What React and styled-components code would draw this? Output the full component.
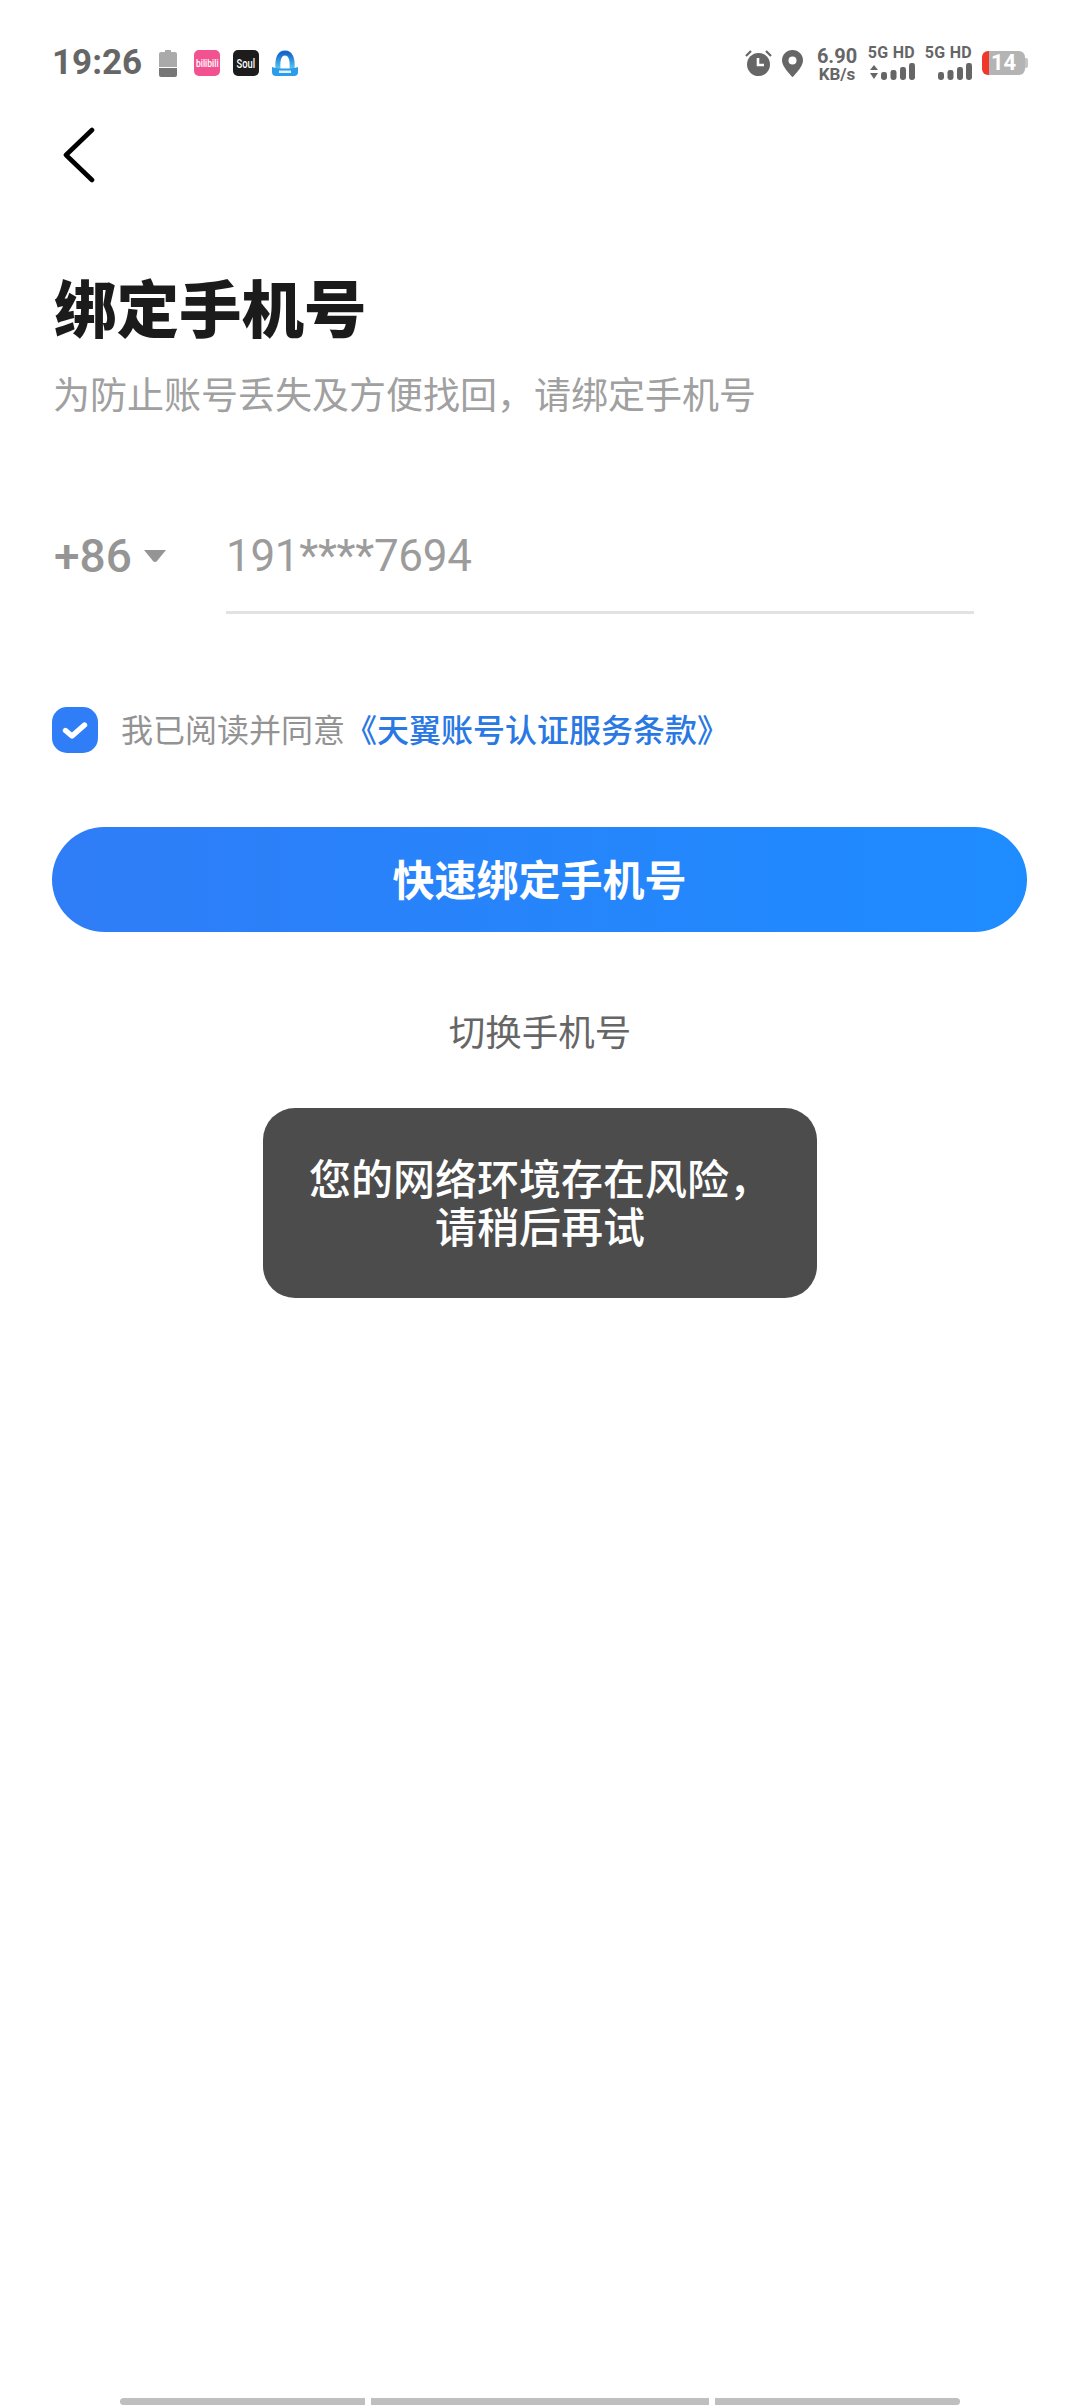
import React from 'react'
import styled, { createGlobalStyle } from 'styled-components'

const cjk = '"Noto Sans CJK SC", "Noto Sans", sans-serif'
const latin = 'Roboto, "Noto Sans CJK SC", sans-serif'

const GlobalStyle = createGlobalStyle`
    html, body {
        margin: 0;
        padding: 0;
        background: #fff;
    }
`

const Page = styled.div`
    position: relative;
    width: 1080px;
    height: 2408px;
    overflow: hidden;
    display: flex;
    flex-direction: column;
    background: #fff;
    font-family: ${cjk};
`

const StatusBar = styled.div`
    display: flex;
    align-items: center;
    justify-content: space-between;
    height: 34px;
    margin-top: 46px;
    padding: 0 52px;
`

const StatusGroup = styled.div`
    display: flex;
    align-items: center;
    gap: ${p => p.$gap}px;
`

const Time = styled.span`
    font-family: ${latin};
    font-size: 35px;
    font-weight: 700;
    line-height: 34px;
    color: #666;
    margin-right: 4px;
`

const ChargeIcon = styled.svg`
    display: block;
    margin-right: 4px;
`

const AppTile = styled.div`
    width: 26px;
    height: 26px;
    border-radius: 5px;
    background: ${p => p.$bg};
    color: #fff;
    display: flex;
    align-items: center;
    justify-content: center;
    font-family: ${latin};
    font-size: ${p => p.$size}px;
    font-weight: 500;
    overflow: hidden;
`

const TileText = styled.span`
    display: inline-block;
    transform: scaleX(${p => p.$squeeze});
`

const Speed = styled.div`
    display: flex;
    flex-direction: column;
    align-items: center;
    width: 42px;
    margin: 4px 0 0 3px;
    color: #666;
    font-family: ${latin};
    font-weight: 700;
`

const SpeedValue = styled.span`
    font-size: 20px;
    line-height: 18px;
    white-space: nowrap;
`

const SpeedUnit = styled.span`
    font-size: 17px;
    line-height: 18px;
    white-space: nowrap;
`

const Signal = styled.div`
    display: flex;
    flex-direction: column;
    align-items: flex-end;
    width: 47px;
    gap: 3px;
`

const SignalLabel = styled.span`
    font-family: ${latin};
    font-size: 16px;
    font-weight: 700;
    line-height: 14px;
    letter-spacing: 0.3px;
    white-space: nowrap;
    color: #666;
`

const BatteryBody = styled.div`
    position: relative;
    width: 43px;
    height: 24px;
    border-radius: 6px;
    background: linear-gradient(90deg, #f0372c 0 7px, #b4b4b4 7px);
    color: #fff;
    font-family: ${latin};
    font-size: 22px;
    font-weight: 700;
    line-height: 24px;
    text-align: center;
    margin-right: 3px;
    &::after {
        content: '';
        position: absolute;
        right: -3px;
        top: 7px;
        width: 3px;
        height: 10px;
        border-radius: 0 2px 2px 0;
        background: #c4c4c4;
    }
`

const BackButton = styled.div`
    width: 34px;
    height: 56px;
    margin: 47px 0 0 62px;
`

const Title = styled.h1`
    margin: 80px 0 0 54px;
    font-size: 62.5px;
    line-height: 86px;
    font-weight: 900;
    color: #1b1b1b;
`

const Subtitle = styled.p`
    margin: 18px 0 0 53px;
    font-size: 37px;
    line-height: 52px;
    color: #a0a0a0;
`

const PhoneRow = styled.div`
    display: flex;
    margin: 92px 0 0 54px;
    height: 137px;
`

const Country = styled.div`
    display: flex;
    align-items: center;
    gap: 11px;
    width: 172px;
    height: 90px;
    color: #959595;
    font-family: ${latin};
    font-size: 46px;
    font-weight: 500;
`

const PhoneField = styled.div`
    width: 748px;
    height: 100px;
    line-height: 90px;
    border-bottom: 3px solid #e2e2e2;
    color: #9c9c9c;
    font-family: ${latin};
    font-size: 44px;
    letter-spacing: -0.3px;
`

const AgreeRow = styled.div`
    display: flex;
    align-items: center;
    gap: 23px;
    margin: 59px 0 0 52px;
    height: 46px;
`

const Agree = styled.span`
    padding-bottom: 5px;
    font-size: 32px;
    line-height: 46px;
    color: #939393;
    white-space: nowrap;
`

const AgreeLink = styled.span`
    color: #2a78e4;
    font-weight: 500;
    font-size: 32px;
`

const PrimaryButton = styled.div`
    display: flex;
    align-items: center;
    justify-content: center;
    box-sizing: border-box;
    width: 975px;
    height: 105px;
    margin: 74px 0 0 52px;
    padding-bottom: 4px;
    border-radius: 53px;
    background: linear-gradient(90deg, #2f7df7, #1e8cff);
    color: #fff;
    font-size: 42px;
    font-weight: 700;
`

const SwitchLink = styled.div`
    margin-top: 73px;
    text-align: center;
    font-size: 36.5px;
    line-height: 52px;
    color: #666;
`

const Toast = styled.div`
    position: absolute;
    left: 263px;
    top: 1108px;
    width: 554px;
    height: 190px;
    box-sizing: border-box;
    padding-top: 45px;
    border-radius: 32px;
    background: #4c4c4c;
    color: #fff;
    text-align: center;
    font-size: 42px;
    line-height: 48px;
    font-weight: 500;
`

const HomeBar = styled.div`
    display: flex;
    gap: 6px;
    margin: auto 0 3px 120px;
`

const HomeSegment = styled.div`
    width: ${p => p.$width}px;
    height: 7px;
    background: #bfbfbf;
    border-radius: ${p => p.$radius};
`

const CheckTile = styled.svg`
    display: block;
    flex: none;
`

function SignalBars({ arrows }) {
    const bars = [[13, 8], [22.5, 10], [32, 13], [41, 17]]
    return (
        <svg width="47" height="17" viewBox="0 0 47 17">
            {arrows && <path d="M6 2l4 5H2zM6 16l-4-6h8z" fill="#666" />}
            {bars.map(([x, h], i) => (
                <rect key={i} x={x} y={17 - h} width="6" height={h} rx="2.4" fill="#666" />
            ))}
        </svg>
    )
}

function App() {
    return (
        <Page>
            <GlobalStyle />
            <StatusBar>
                <StatusGroup $gap={13}>
                    <Time>19:26</Time>
                    <ChargeIcon width="18" height="27" viewBox="0 0 18 27">
                        <path d="M6 0h6v2h4a2 2 0 0 1 2 2v13H0V4a2 2 0 0 1 2-2h4z" fill="#aaa" />
                        <path d="M0 18h18v7a2 2 0 0 1-2 2H2a2 2 0 0 1-2-2z" fill="#777" />
                    </ChargeIcon>
                    <AppTile $bg="#f2528f" $size={10}>
                        <TileText $squeeze={0.85}>bilibili</TileText>
                    </AppTile>
                    <AppTile $bg="#1c1c1c" $size={13}>
                        <TileText $squeeze={0.72}>Soul</TileText>
                    </AppTile>
                    <svg width="26" height="26" viewBox="0 0 26 26">
                        <defs>
                            <linearGradient id="arch" x1="0" y1="0" x2="0" y2="1">
                                <stop offset="0" stopColor="#1466c8" />
                                <stop offset="1" stopColor="#58c8f5" />
                            </linearGradient>
                        </defs>
                        <path d="M6 19C5 8 8 3 13 3s8 5 7 16" fill="none" stroke="url(#arch)" strokeWidth="5" />
                        <path d="M0 17c6 2 20 2 26 0v5a4 4 0 0 1-4 4H4a4 4 0 0 1-4-4z" fill="#2b9bea" />
                        <rect x="7" y="20.5" width="12" height="2.5" fill="#dff1ff" />
                    </svg>
                </StatusGroup>
                <StatusGroup $gap={10}>
                    <svg width="27" height="28" viewBox="0 0 27 28">
                        <circle cx="13.5" cy="15.5" r="11.5" fill="#666" />
                        <path d="M13 9v7h6" fill="none" stroke="#fff" strokeWidth="2.6" />
                        <path d="M1 7l5-5M26 7l-5-5" stroke="#666" strokeWidth="2.2" />
                    </svg>
                    <svg width="21" height="27" viewBox="0 0 21 27">
                        <path d="M10.5 0C4.7 0 0 4.6 0 10.4 0 17 10.5 27 10.5 27S21 17 21 10.4C21 4.6 16.3 0 10.5 0z" fill="#666" />
                        <circle cx="10.5" cy="10.5" r="4" fill="#fff" />
                    </svg>
                    <Speed>
                        <SpeedValue>6.90</SpeedValue>
                        <SpeedUnit>KB/s</SpeedUnit>
                    </Speed>
                    <Signal>
                        <SignalLabel>5G HD</SignalLabel>
                        <SignalBars arrows />
                    </Signal>
                    <Signal>
                        <SignalLabel>5G HD</SignalLabel>
                        <SignalBars />
                    </Signal>
                    <BatteryBody>14</BatteryBody>
                </StatusGroup>
            </StatusBar>
            <BackButton>
                <svg width="34" height="56" viewBox="0 0 34 56">
                    <path d="M30 3 4 28l26 25" fill="none" stroke="#000" strokeWidth="4.6" strokeLinecap="round" strokeLinejoin="round" />
                </svg>
            </BackButton>
            <Title>绑定手机号</Title>
            <Subtitle>为防止账号丢失及方便找回，请绑定手机号</Subtitle>
            <PhoneRow>
                <Country>
                    +86
                    <svg width="24" height="14" viewBox="0 0 24 14">
                        <path d="M1 1h22L14 12a2.6 2.6 0 0 1-4 0z" fill="#959595" />
                    </svg>
                </Country>
                <PhoneField>191****7694</PhoneField>
            </PhoneRow>
            <AgreeRow>
                <CheckTile width="46" height="46" viewBox="0 0 46 46">
                    <rect width="46" height="46" rx="15" fill="#2f7df7" />
                    <path d="M13.5 23.5l6.5 5.5 12.5-11" fill="none" stroke="#fff" strokeWidth="5.4" strokeLinecap="round" strokeLinejoin="round" />
                </CheckTile>
                <Agree>
                    我已阅读并同意<AgreeLink>《天翼账号认证服务条款》</AgreeLink>
                </Agree>
            </AgreeRow>
            <PrimaryButton>快速绑定手机号</PrimaryButton>
            <SwitchLink>切换手机号</SwitchLink>
            <Toast>
                您的网络环境存在风险，
                <br />
                请稍后再试
            </Toast>
            <HomeBar>
                <HomeSegment $width={245} $radius="4px 0 0 4px" />
                <HomeSegment $width={338} $radius="0" />
                <HomeSegment $width={245} $radius="0 4px 4px 0" />
            </HomeBar>
        </Page>
    )
}

export default App
